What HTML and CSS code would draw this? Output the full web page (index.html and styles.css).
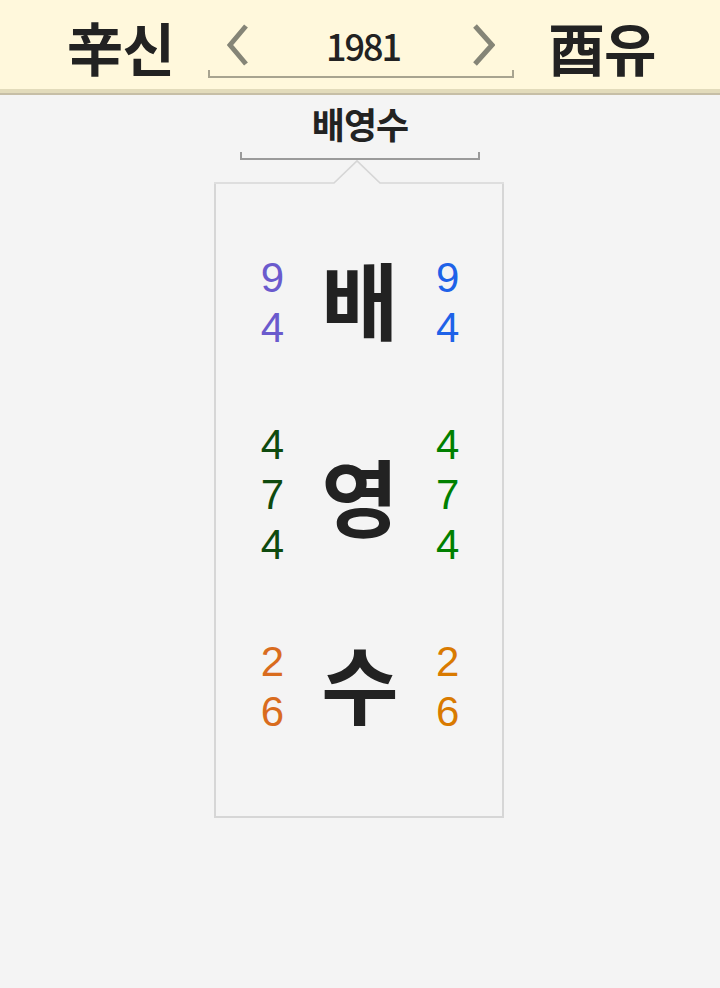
FILE: index.html
```html
<!DOCTYPE html>
<html lang="ko">
<head>
<meta charset="utf-8">
<title>배영수</title>
<link rel="stylesheet" href="styles.css">
</head>
<body>
<header class="top">
  <div class="pillar">辛신</div>
  <div class="nav">
    <div class="nav-row">
      <svg class="chev" width="24" height="42" viewBox="0 0 24 42"><polyline points="19,2 3,21 19,40" fill="none" stroke="#858577" stroke-width="5"/></svg>
      <div class="year">1981</div>
      <svg class="chev" width="24" height="42" viewBox="0 0 24 42"><polyline points="4,2 21,21 4,40" fill="none" stroke="#858577" stroke-width="5"/></svg>
    </div>
    <div class="nav-bracket"></div>
  </div>
  <div class="pillar">酉유</div>
</header>
<main class="main">
  <div class="title">배영수</div>
  <div class="title-bracket"></div>
  <div class="card-wrap">
    <svg class="notch" width="290" height="24" viewBox="0 0 290 24"><polyline points="0,23 120,23 143,0.8 166,23 290,23" fill="none" stroke="#d6d6d6" stroke-width="1.6"/></svg>
    <div class="card">
      <div class="row">
        <div class="nums c-purple"><span>9</span><span>4</span></div>
        <div class="ch">배</div>
        <div class="nums c-blue"><span>9</span><span>4</span></div>
      </div>
      <div class="row">
        <div class="nums c-dgreen"><span>4</span><span>7</span><span>4</span></div>
        <div class="ch ch-mid">영</div>
        <div class="nums c-green"><span>4</span><span>7</span><span>4</span></div>
      </div>
      <div class="row">
        <div class="nums c-orange"><span>2</span><span>6</span></div>
        <div class="ch">수</div>
        <div class="nums c-dorange"><span>2</span><span>6</span></div>
      </div>
    </div>
  </div>
</main>
</body>
</html>
```

FILE: styles.css
```css
* { box-sizing: border-box; }
html, body { margin: 0; padding: 0; }
body {
  background: #f4f4f4;
  font-family: "Noto Sans CJK KR", "Noto Sans", sans-serif;
  color: #222;
  width: 720px;
  height: 988px;
  overflow: hidden;
}
.top {
  background: #fff8dc;
  height: 95px;
  border-bottom: 2px solid #c6bea6;
  box-shadow: inset 0 -4px 0 #e2dbbb;
  display: flex;
  justify-content: center;
  align-items: flex-start;
  gap: 34px;
  padding-left: 2px;
}
.pillar {
  font-size: 57px;
  font-weight: 700;
  line-height: 1;
  margin-top: 18px;
  letter-spacing: -1px;
  color: #222;
}
.nav {
  width: 306px;
  margin-top: 22px;
  display: flex;
  flex-direction: column;
}
.nav-row {
  display: flex;
  justify-content: space-between;
  align-items: center;
  padding: 0 19px;
  height: 46px;
}
.year {
  font-size: 36px;
  font-weight: 500;
  line-height: 1;
  letter-spacing: -2px;
  color: #222;
  margin-left: 4px;
}
.nav-bracket {
  height: 8px;
  border: 2px solid #a8a490;
  border-top: none;
  margin-top: 2px;
}
.main {
  display: flex;
  flex-direction: column;
  align-items: center;
}
.title {
  font-size: 36px;
  font-weight: 700;
  line-height: 1;
  margin-top: 10px;
  letter-spacing: -1px;
  color: #222;
}
.title-bracket {
  width: 240px;
  height: 8px;
  border: 2px solid #9a9a9a;
  border-top: none;
  margin-top: 11px;
  margin-left: -1px;
}
.card-wrap {
  display: flex;
  flex-direction: column;
  margin-left: -3px;
}
.notch { display: block; }
.card {
  width: 290px;
  height: 634px;
  border: 2px solid #d6d6d6;
  border-top: none;
  display: flex;
  flex-direction: column;
  gap: 67px;
  padding-top: 69px;
}
.row {
  display: flex;
  justify-content: center;
  align-items: center;
  gap: 34px;
  padding-left: 3px;
}
.nums {
  display: flex;
  flex-direction: column;
  align-items: center;
  width: 30px;
  font-family: "Liberation Sans", Arial, sans-serif;
  font-size: 42px;
  line-height: 50px;
}
.nums span {
  display: block;
  height: 50px;
}
.ch {
  font-size: 84px;
  font-weight: 700;
  line-height: 1;
  color: #222;
  margin-bottom: 10px;
}
.ch-mid { margin-bottom: 0; }
.c-purple { color: #6a5acd; }
.c-blue { color: #1e62e8; }
.c-dgreen { color: #0e4a0e; }
.c-green { color: #008000; }
.c-orange { color: #d96c1e; }
.c-dorange { color: #d97a00; }
```
